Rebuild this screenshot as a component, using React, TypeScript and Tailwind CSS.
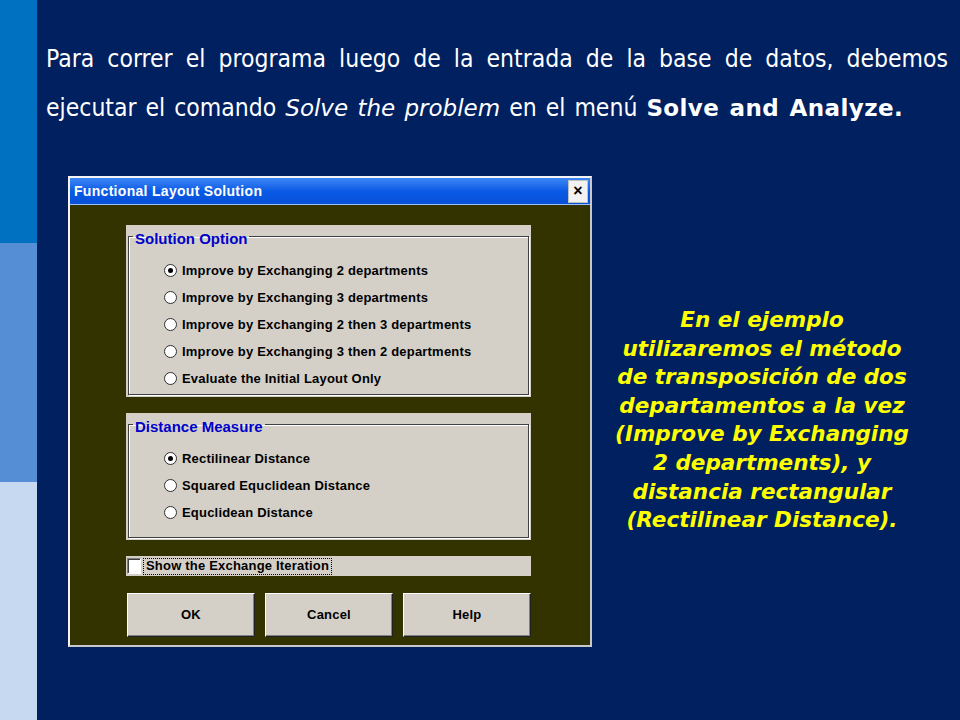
import React from 'react';

const SOLUTION_OPTIONS = [
  'Improve by Exchanging 2 departments',
  'Improve by Exchanging 3 departments',
  'Improve by Exchanging 2 then 3 departments',
  'Improve by Exchanging 3 then 2 departments',
  'Evaluate the Initial Layout Only',
];

const DISTANCE_OPTIONS = ['Rectilinear Distance', 'Squared Equclidean Distance', 'Equclidean Distance'];

const YELLOW_LINES = [
  'En el ejemplo',
  'utilizaremos el método',
  'de transposición de dos',
  'departamentos a la vez',
  '(Improve by Exchanging',
  '2 departments), y',
  'distancia rectangular',
  '(Rectilinear Distance).',
];

const winFont = { fontFamily: '"Liberation Sans", Arial, sans-serif' };
const tahoma = { fontFamily: '"DejaVu Sans Condensed", Tahoma, "DejaVu Sans", sans-serif' };
const verdana = { fontFamily: '"DejaVu Sans", Verdana, sans-serif' };

const Radio = ({ label, checked }: { label: string; checked?: boolean }) => (
  <div className="flex items-center h-[27px]">
    <span className="w-[13px] h-[13px] rounded-full bg-white border border-[#303030] flex items-center justify-center shrink-0">
      {checked && <span className="w-[5px] h-[5px] rounded-full bg-black" />}
    </span>
    <span className="ml-[5px] text-[13px] font-bold tracking-[0.2px] text-black">{label}</span>
  </div>
);

const GroupBox = ({ title, items, h }: { title: string; items: string[]; h: string }) => (
  <div className={`bg-[#d4d0c8] px-[2px] pb-[2px] ${h}`}>
    <fieldset className="h-full border border-[#404040] shadow-[inset_1px_1px_0_#fff,1px_1px_0_#fff]">
      <legend className="ml-[4px] px-[2px] pt-[6px] text-[15px] leading-[16px] font-bold text-[#0000c8]">{title}</legend>
      <div className="pl-[35px] pt-[10px]">
        {items.map((it, i) => (
          <Radio key={i} label={it} checked={i === 0} />
        ))}
      </div>
    </fieldset>
  </div>
);

const WinButton = ({ children }: { children: React.ReactNode }) => (
  <button className="w-[128px] h-[44px] bg-[#d4d0c8] border border-t-white border-l-white border-r-[#202020] border-b-[#202020] shadow-[inset_-1px_-1px_0_#808080] text-[13px] font-bold tracking-[0.2px] text-black">
    {children}
  </button>
);

export default function App() {
  return (
    <div className="flex w-[960px] h-[720px] bg-[#002060] overflow-hidden">
      <div className="w-[37px] shrink-0 flex flex-col">
        <div className="h-[243px] bg-[#0070c0]" />
        <div className="h-[239px] bg-[#558ed5]" />
        <div className="flex-1 bg-[#c6d9f1]" />
      </div>

      <div className="flex-1 flex flex-col">
        <div className="pl-[9px] pr-[12px] pt-[34px] text-white text-[24.5px] leading-[49px]" style={tahoma}>
          <div className="text-justify [text-align-last:justify] whitespace-nowrap">
            Para correr el programa luego de la entrada de la base de datos, debemos
          </div>
          <div className="h-[49px] whitespace-nowrap [word-spacing:2px]">
            ejecutar el comando{' '}
            <i className="text-[23px]" style={verdana}>
              Solve the problem
            </i>{' '}
            en el menú{' '}
            <b className="text-[23px] tracking-[0.4px]" style={verdana}>
              Solve and Analyze.
            </b>
          </div>
        </div>

        <div className="flex mt-[44px]">
          <div
            className="ml-[31px] w-[524px] h-[471px] flex flex-col bg-[#333300] border-2 border-[#f4f4f4] border-r-[#c8c8c8] border-b-[#c8c8c8]"
            style={winFont}
          >
            <div className="h-[27px] shrink-0 flex items-center justify-between pl-[4px] pr-[2px] bg-gradient-to-b from-[#3d86f5] via-[#0a5ae6] to-[#0850d8] border-b border-[#9cc0f8]">
              <span className="text-white text-[14px] font-bold tracking-[0.3px]">Functional Layout Solution</span>
              <span className="w-[20px] h-[23px] bg-[#f2f2f2] border border-[#c0c0c0] flex items-center justify-center text-black text-[16px] font-bold leading-none">
                ×
              </span>
            </div>

            <div className="flex-1 flex flex-col pl-[56px] pr-[59px] pt-[20px]">
              <GroupBox title="Solution Option" items={SOLUTION_OPTIONS} h="h-[172px]" />
              <div className="h-[16px]" />
              <GroupBox title="Distance Measure" items={DISTANCE_OPTIONS} h="h-[127px]" />

              <div className="mt-[16px] h-[20px] bg-[#d4d0c8] flex items-center pl-[1px]">
                <span className="w-[14px] h-[16px] bg-white border border-t-[#808080] border-l-[#808080] border-b-white border-r-white shadow-[inset_1px_1px_0_#404040]" />
                <span className="ml-[2px] px-[2px] h-[17px] flex items-center border border-dotted border-black text-[13px] font-bold tracking-[0.2px] text-black">
                  Show the Exchange Iteration
                </span>
              </div>

              <div className="mt-[17px] flex gap-[10px] pl-[1px]">
                <WinButton>OK</WinButton>
                <WinButton>Cancel</WinButton>
                <WinButton>Help</WinButton>
              </div>
            </div>
          </div>

          <div
            className="ml-[5px] w-[330px] mt-[130px] flex flex-col items-center text-[#ffff00] text-[21.5px] leading-[28.6px] font-bold italic"
            style={verdana}
          >
            {YELLOW_LINES.map((l, i) => (
              <span key={i} className="whitespace-nowrap">
                {l}
              </span>
            ))}
          </div>
        </div>
      </div>
    </div>
  );
}
